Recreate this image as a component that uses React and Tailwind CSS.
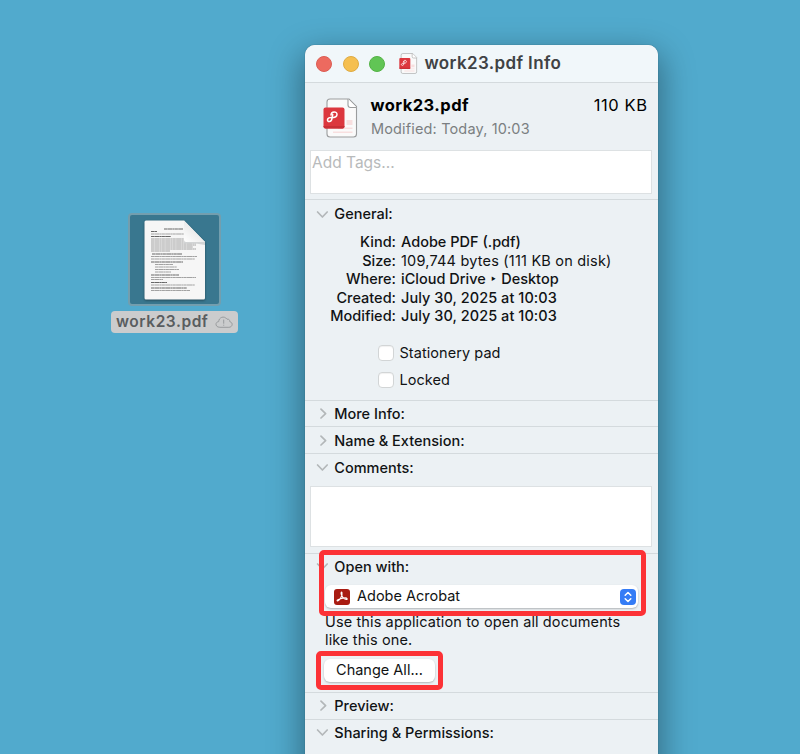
import React from "react";

function Chevron({ open }) {
  return (
    <svg className="h-3 w-3 shrink-0" viewBox="0 0 12 12" fill="none" stroke="#b3b7b9" strokeWidth="1.7" strokeLinecap="round" strokeLinejoin="round">
      <path d={open ? "M1.6 3 L6.4 8 L11.2 3" : "M5 1.2 L9.6 5.6 L5 10"} />
    </svg>
  );
}

function SectionTitle({ open, children, className = "" }) {
  return (
    <div className={"flex h-[26px] items-center gap-1.5 pl-[11px] " + className}>
      <Chevron open={open} />
      <span className="pl-[0.3px] text-[14.5px] font-medium">{children}</span>
    </div>
  );
}

function PdfIcon({ className }) {
  return (
    <svg className={className} viewBox="0 0 36 40">
      <path d="M7 1H26L33.5 8.5V36Q33.5 39 30.5 39H7Q4 39 4 36V4Q4 1 7 1Z" fill="#fafafa" stroke="#9b9d9e" strokeWidth="1.1" />
      <path d="M25 1V7Q25 9.5 27.5 9.5H33.5" fill="#fff" stroke="#9b9d9e" strokeWidth="1.1" />
      <path d="M23.5 22H29.5V27H23.5ZM15 29.5H29.5V31H15ZM10 33.5H29.5V35H10Z" fill="#f8dfdf" />
      <rect x="0.5" y="9.5" width="21" height="21" rx="2" fill="#dc373e" />
      <path d="M.5 28H21.5V28.5Q21.5 30.5 19.5 30.5H2.5Q.5 30.5 .5 28.5Z" fill="#c92f36" />
      <path d="M8 17C8.2 12.9 14 13 14 16.4C14 19.2 11 19.6 8.2 19.6C3.6 19.6 3.6 23.6 6.4 23.6C9.6 23.6 8.6 20.4 9.8 16.6" fill="none" stroke="#fff" strokeWidth="1.5" strokeLinecap="round" />
    </svg>
  );
}

const lines = [
  [20, 9, 19], [7, 11.5, 6], [7, 14, 33], [7, 16.5, 20], [7, 19, 40], [7, 21, 43], [7, 23, 45], [7, 25, 45], [7, 27, 42], [7, 29, 45], [7, 31, 19],
  [8, 34, 30], [7, 36.5, 46], [7, 39, 44], [7, 42, 32], [11, 44.5, 18], [11, 47, 22], [11, 49.5, 24], [11, 52, 16], [7, 55, 28], [7, 57.5, 45], [7, 59.5, 12], [7, 62.5, 16], [7, 65, 44], [7, 68, 36], [7, 70.5, 39],
];

function DesktopFile() {
  return (
    <div className="flex w-[127px] flex-col items-center">
      <div className="flex h-[93px] w-[93px] items-center justify-center rounded-[4px] border-2 border-[#739eae] bg-[#39778f]">
        <svg className="h-[80px] w-[62px] drop-shadow-[0_1px_1px_rgba(0,0,0,0.4)]" viewBox="0 0 62 80">
          <defs>
            <linearGradient id="fold" x1="0" y1="1" x2="0.6" y2="0.3">
              <stop offset="0" stopColor="#ffffff" />
              <stop offset="1" stopColor="#e6e6e6" />
            </linearGradient>
          </defs>
          <path d="M2 .5H40L61 22V78Q61 79.5 59.5 79.5H2Q.5 79.5 .5 78V2Q.5 .5 2 .5Z" fill="#f6f6f6" />
          {lines.map(([x, y, w], i) => (
            <path key={i} d={`M${x} ${y}h${w}`} stroke={[0, 1, 3, 11, 14, 19, 22, 24].includes(i) ? "#666" : "#a2a2a2"} strokeWidth="1.1" strokeDasharray="3 .3 5 .3 2 .3" />
          ))}
          <path d="M40 21.5H61V25Q50 22.5 40 23.5Z" fill="#d2d4d5" />
          <path d="M40 .5L61 22H42Q40 22 40 20Z" fill="url(#fold)" />
        </svg>
      </div>
      <div className="mt-[5px] flex h-[22px] w-[127px] items-center justify-between rounded-[4px] bg-[#cbcccd] pl-[5px] pr-[5px] text-[#595d5f]">
        <span className="text-[15.5px] font-semibold tracking-[0.55px]">work23.pdf</span>
        <svg className="h-[14px] w-[18px]" viewBox="0 0 18 14" fill="none" stroke="#999c9e" strokeWidth="1" strokeLinecap="round">
          <path d="M4.5 12.3C-.2 12.3 0 6.8 3.7 6.6C3.7 2.6 9 .1 12 4.2C14.2 3.8 14.8 5.3 14.8 6.7C18.5 7.5 17.6 12.3 14.3 12.3Z" />
          <path d="M8.7 5V8.3M8.7 10.1V10.3" />
        </svg>
      </div>
    </div>
  );
}

const details = [
  ["Kind:", "Adobe PDF (.pdf)", ""],
  ["Size:", "109,744 bytes (111 KB on disk)", "font-normal tracking-[0.2px]"],
  ["Where:", "iCloud Drive ‣ Desktop", ""],
  ["Created:", "July 30, 2025 at 10:03", "tracking-[0.06px]"],
  ["Modified:", "July 30, 2025 at 10:03", "tracking-[0.06px]"],
];

function Checkbox({ label }) {
  return (
    <div className="flex h-[27px] items-center gap-[5px] pl-[73px]">
      <span className="h-4 w-4 rounded-[4px] border border-[#d2d5d6] bg-white shadow-[inset_0_1px_1px_rgba(0,0,0,0.06)]" />
      <span className="pl-[0.5px] text-[14.5px] tracking-[0.06px]">{label}</span>
    </div>
  );
}

export default function App() {
  return (
    <main className="flex h-[754px] w-[800px] overflow-hidden bg-[#51aacd] font-['Inter','Liberation_Sans',sans-serif] leading-none text-[#111314]">
      <div className="w-[305px] shrink-0 pl-[111px] pt-[213px]">
        <DesktopFile />
      </div>
      <section className="relative mt-[45px] h-[730px] w-[353px] shrink-0 rounded-[10px] bg-[#ecf1f4] shadow-[0_0_1px_rgba(0,0,0,0.5),0_12px_32px_4px_rgba(0,0,0,0.36)]">
        <header className="flex h-[38px] items-center rounded-t-[10px] border-b border-[#d4dadd] bg-[#f1f7fa] pl-[11px]">
          <div className="flex gap-[10.5px]">
            <span className="h-4 w-4 rounded-full border border-[#db5d54] bg-[#ed6a5f]" />
            <span className="h-4 w-4 rounded-full border border-[#dfab43] bg-[#f5bf50]" />
            <span className="h-4 w-4 rounded-full border border-[#54b346] bg-[#61c555]" />
          </div>
          <PdfIcon className="ml-[14px] h-[21px] w-[19px]" />
          <h1 className="ml-[6.5px] text-[17px] font-semibold tracking-[0.36px] text-[#3f4244]">work23.pdf Info</h1>
        </header>

        <div className="h-[117px] border-b border-[#d4dadd]">
          <div className="flex h-[67px] pl-[18px] pr-[11px]">
            <PdfIcon className="mt-[15px] h-[40px] w-[36px]" />
            <div className="ml-[11.5px] flex-1 pt-[14px]">
              <div className="flex items-center justify-between text-black">
                <h2 className="text-[16.5px] font-bold tracking-[0.45px]">work23.pdf</h2>
                <span className="mr-[-0.6px] text-[16.5px] tracking-[0.6px]">110 KB</span>
              </div>
              <p className="mt-[8px] pl-[0.5px] text-[14.5px] tracking-[0.15px] text-[#7b7f81]">Modified: Today, 10:03</p>
            </div>
          </div>
          <div className="ml-[5px] h-[44px] w-[342px] border border-[#dde1e3] bg-white pl-px pt-[3.5px] text-[15.5px] text-[#b8babb]">Add Tags...</div>
        </div>

        <div className="h-[201px] border-b border-[#d4dadd]">
          <SectionTitle open className="pt-[3px]">General:</SectionTitle>
          <div className="mt-[7px] text-[14.5px] font-medium">
            {details.map(([name, value, style]) => (
              <div key={name} className="flex h-[18.6px] items-center">
                <span className="w-[91px] text-right">{name}</span>
                <span className={"ml-[5px] whitespace-nowrap " + style}>{value}</span>
              </div>
            ))}
          </div>
          <div className="mt-[14px]">
            <Checkbox label="Stationery pad" />
            <Checkbox label="Locked" />
          </div>
        </div>

        <div className="h-[26px] border-b border-[#d4dadd]"><SectionTitle>More Info:</SectionTitle></div>
        <div className="h-[27px] border-b border-[#d4dadd]"><SectionTitle className="pt-[2px]">Name &amp; Extension:</SectionTitle></div>
        <div className="h-[100px] border-b border-[#d4dadd]">
          <SectionTitle open className="pt-[2px]">Comments:</SectionTitle>
          <div className="ml-[5px] mt-[6px] h-[61px] w-[342px] border border-[#dde1e3] bg-white" />
        </div>
        <div className="h-[139px] border-b border-[#d4dadd]">
          <SectionTitle open>Open with:</SectionTitle>
          <div className="ml-5 mt-[5px] flex h-[23px] w-[313px] items-center rounded-[6px] bg-white pl-[9px] pr-[2px] shadow-[0_1px_2px_rgba(0,0,0,0.25)]">
            <svg className="h-4 w-4" viewBox="0 0 16 16">
              <rect width="16" height="16" rx="3" fill="#a91c12" />
              <path d="M3.2 11.9C4.8 12.9 8.9 6.5 8 3.6C7.5 2.1 6.5 4 7.5 6C8.4 8 10.8 10.3 12.4 10.5C13.7 10.6 13.4 8.9 11.3 8.9C8.5 8.9 2.1 10.9 3.2 11.9Z" fill="none" stroke="#fff" strokeWidth="1.1" />
            </svg>
            <span className="ml-[7px] flex-1 text-[14.5px]">Adobe Acrobat</span>
            <svg className="h-4 w-4" viewBox="0 0 16 16">
              <rect width="16" height="16" rx="4" fill="#347cf6" />
              <path d="M5.2 6.2L8 3.5L10.8 6.2M5.2 9.8L8 12.5L10.8 9.8" fill="none" stroke="#fff" strokeWidth="1.5" strokeLinecap="round" strokeLinejoin="round" />
            </svg>
          </div>
          <p className="ml-5 mt-[5px] whitespace-nowrap text-[14.5px] leading-[18px] tracking-[0.12px]">Use this application to open all documents<br />like this one.</p>
          <button className="ml-[19px] mt-[10px] flex h-[23px] w-[111px] items-center justify-center rounded-[6px] bg-white text-[14.5px] leading-none shadow-[0_1px_2px_rgba(0,0,0,0.25)]">Change All...</button>
        </div>
        <div className="border-b border-[#d4dadd]"><SectionTitle>Preview:</SectionTitle></div>
        <SectionTitle open>Sharing &amp; Permissions:</SectionTitle>

        <div className="absolute left-[14px] top-[505px] h-[66px] w-[327px] rounded-[5px] border-[5px] border-[#fc3236]" />
        <div className="absolute left-[11px] top-[606px] h-[39px] w-[127px] rounded-[5px] border-[5px] border-[#fc3236]" />
      </section>
    </main>
  );
}
